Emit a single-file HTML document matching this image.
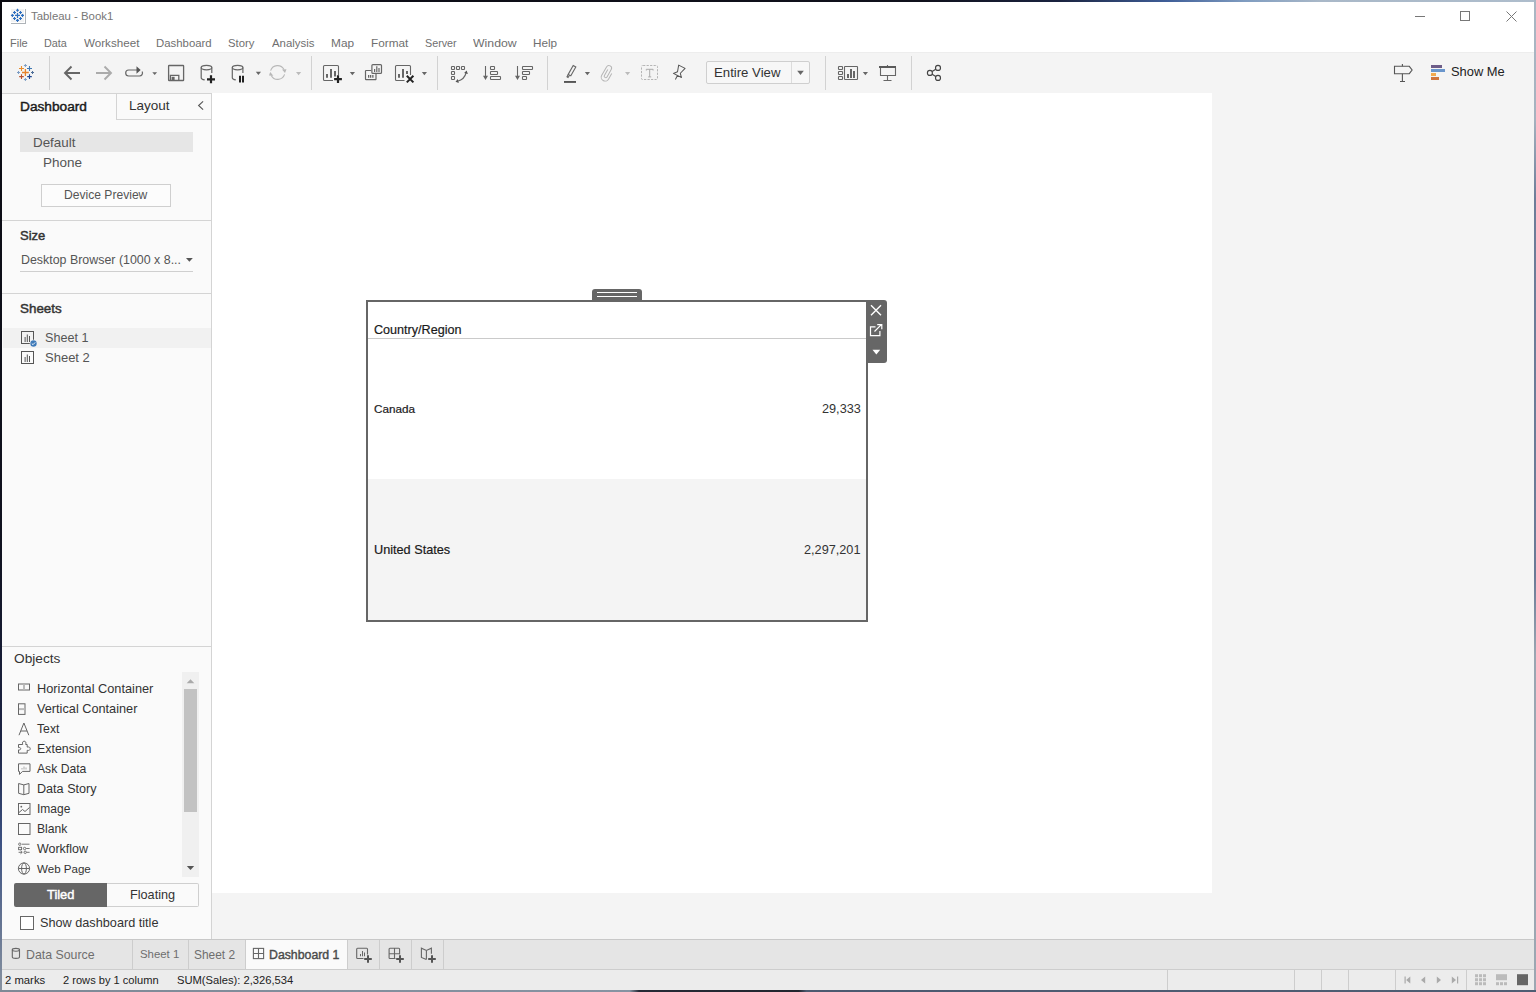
<!DOCTYPE html>
<html><head><meta charset="utf-8">
<style>
*{margin:0;padding:0;box-sizing:border-box}
html,body{width:1536px;height:992px;overflow:hidden;background:#fff}
body{position:relative;font-family:"Liberation Sans",sans-serif;color:#333}
.a{position:absolute}
.t{position:absolute;white-space:nowrap;line-height:1}
svg{position:absolute;overflow:visible}
</style></head><body>
<!-- desktop edges -->
<div class="a" style="left:0;top:0;width:1536px;height:2px;background:linear-gradient(90deg,#0b0b12 0%,#10111c 60%,#1a2340 69%,#3f5e98 76%,#7f9cc0 81%,#a9b8c8 86%,#aebdcc 100%)"></div>
<div class="a" style="left:0;top:0;width:2px;height:992px;background:linear-gradient(180deg,#0a0a10 0%,#10121f 55%,#1c2445 75%,#3d5283 85%,#8792a0 100%)"></div>
<div class="a" style="left:1534px;top:0;width:2px;height:992px;background:linear-gradient(180deg,#aab7c4 0%,#a5b2bf 12%,#6d7d99 20%,#6a7a96 58%,#9aa6b2 66%,#9ca7b2 100%)"></div>
<div class="a" style="left:0;top:990px;width:1536px;height:2px;background:linear-gradient(90deg,#7e8996 0%,#8693a2 41%,#262a36 41.6%,#22262f 52%,#4c5a70 52.5%,#4f5d73 100%)"></div>
<!-- title bar -->
<div class="a" style="left:2px;top:2px;width:1532px;height:50px;background:#fff"></div>
<div class="a" style="left:11px;top:9px;width:13px;height:13px;background:#f2f2f2"></div><div class="a" style="left:25px;top:9px;width:1px;height:15px;background:#aeb3b8"></div><div class="a" style="left:11px;top:23px;width:15px;height:1px;background:#aeb3b8"></div>
<div class="t" style="left:31px;top:11px;font-size:11.4px;color:#777">Tableau - Book1</div>
<div class="a" style="left:1415px;top:16px;width:10px;height:1px;background:#777"></div>
<div class="a" style="left:1460px;top:11px;width:10px;height:10px;border:1px solid #777"></div>

<!-- menu -->
<div class="t" style="left:10px;top:38px;font-size:11.5px;color:#6f6f6f;transform:scaleX(0.957);transform-origin:0 0">File</div>
<div class="t" style="left:44px;top:38px;font-size:11.5px;color:#6f6f6f;transform:scaleX(0.942);transform-origin:0 0">Data</div>
<div class="t" style="left:84px;top:38px;font-size:11.5px;color:#6f6f6f;transform:scaleX(1.011);transform-origin:0 0">Worksheet</div>
<div class="t" style="left:156px;top:38px;font-size:11.5px;color:#6f6f6f;transform:scaleX(0.989);transform-origin:0 0">Dashboard</div>
<div class="t" style="left:228px;top:38px;font-size:11.5px;color:#6f6f6f;transform:scaleX(0.981);transform-origin:0 0">Story</div>
<div class="t" style="left:272px;top:38px;font-size:11.5px;color:#6f6f6f;transform:scaleX(0.993);transform-origin:0 0">Analysis</div>
<div class="t" style="left:331px;top:38px;font-size:11.5px;color:#6f6f6f;transform:scaleX(1.031);transform-origin:0 0">Map</div>
<div class="t" style="left:371px;top:38px;font-size:11.5px;color:#6f6f6f;transform:scaleX(1.022);transform-origin:0 0">Format</div>
<div class="t" style="left:425px;top:38px;font-size:11.5px;color:#6f6f6f;transform:scaleX(0.935);transform-origin:0 0">Server</div>
<div class="t" style="left:473px;top:38px;font-size:11.5px;color:#6f6f6f;transform:scaleX(1.068);transform-origin:0 0">Window</div>
<div class="t" style="left:533px;top:38px;font-size:11.5px;color:#6f6f6f;transform:scaleX(1.021);transform-origin:0 0">Help</div>

<!-- toolbar -->
<div class="a" style="left:2px;top:52px;width:1532px;height:41px;background:#f4f4f4;border-top:1px solid #ededed"></div>
<div class="a" style="left:49px;top:56px;width:1px;height:34px;background:#d2d2d2"></div>
<div class="a" style="left:311px;top:56px;width:1px;height:34px;background:#d2d2d2"></div>
<div class="a" style="left:437px;top:56px;width:1px;height:34px;background:#d2d2d2"></div>
<div class="a" style="left:547px;top:56px;width:1px;height:34px;background:#d2d2d2"></div>
<div class="a" style="left:825px;top:56px;width:1px;height:34px;background:#d2d2d2"></div>
<div class="a" style="left:911px;top:56px;width:1px;height:34px;background:#d2d2d2"></div>
<!-- Entire View -->
<div class="a" style="left:706px;top:61px;width:104px;height:23px;border:1px solid #cfcfcf;border-radius:2px;background:#f7f7f7"></div>
<div class="a" style="left:791px;top:62px;width:1px;height:21px;background:#dcdcdc"></div>
<div class="t" style="left:714px;top:66px;font-size:13.2px;color:#333">Entire View</div>
<div class="t" style="left:1451px;top:66px;font-size:12.9px;color:#222">Show Me</div>

<!-- left panel -->
<div class="a" style="left:2px;top:93px;width:210px;height:846px;background:#fafafa;border-right:1px solid #d4d4d4;border-top:1px solid #d4d4d4"></div>
<div class="a" style="left:116px;top:93px;width:96px;height:27px;border-left:1px solid #d4d4d4;border-bottom:1px solid #d4d4d4;border-right:1px solid #d4d4d4"></div>
<div class="t" style="left:20px;top:100px;font-size:13.7px;color:#1a1a1a;-webkit-text-stroke:0.45px #1a1a1a">Dashboard</div>
<div class="t" style="left:129px;top:99px;font-size:13.5px;color:#333">Layout</div>
<div class="a" style="left:20px;top:132px;width:173px;height:20px;background:#e6e6e6"></div>
<div class="t" style="left:33px;top:136px;font-size:13.4px;color:#555">Default</div>
<div class="t" style="left:43px;top:156px;font-size:13.5px;color:#555">Phone</div>
<div class="a" style="left:41px;top:184px;width:130px;height:23px;border:1px solid #cfcfcf;background:#fcfcfc"></div>
<div class="t" style="left:64px;top:189px;font-size:12.1px;color:#555">Device Preview</div>
<div class="a" style="left:2px;top:220px;width:209px;height:1px;background:#d4d4d4"></div>
<div class="t" style="left:20px;top:229px;font-size:13px;color:#333;-webkit-text-stroke:0.45px #333">Size</div>
<div class="t" style="left:21px;top:254px;font-size:12.42px;color:#555">Desktop Browser (1000 x 8...</div>
<div class="a" style="left:20px;top:271px;width:173px;height:1px;background:#cfcfcf"></div>
<div class="a" style="left:2px;top:293px;width:209px;height:1px;background:#d4d4d4"></div>
<div class="t" style="left:20px;top:302px;font-size:13.4px;color:#333;-webkit-text-stroke:0.45px #333">Sheets</div>
<div class="a" style="left:3px;top:328px;width:208px;height:20px;background:#f1f1f1"></div>
<div class="t" style="left:45px;top:332px;font-size:12.6px;color:#555">Sheet 1</div>
<div class="t" style="left:45px;top:351px;font-size:13px;color:#555">Sheet 2</div>
<div class="a" style="left:2px;top:646px;width:209px;height:1px;background:#d4d4d4"></div>
<div class="t" style="left:14px;top:652px;font-size:13.7px;color:#333">Objects</div>
<!-- objects list -->
<div class="t" style="left:37px;top:683px;font-size:12.77px;color:#333">Horizontal Container</div>
<div class="t" style="left:37px;top:703px;font-size:12.72px;color:#333">Vertical Container</div>
<div class="t" style="left:37px;top:723px;font-size:12.22px;color:#333">Text</div>
<div class="t" style="left:37px;top:743px;font-size:12.39px;color:#333">Extension</div>
<div class="t" style="left:37px;top:763px;font-size:12.17px;color:#333">Ask Data</div>
<div class="t" style="left:37px;top:783px;font-size:12.61px;color:#333">Data Story</div>
<div class="t" style="left:37px;top:803px;font-size:12.0px;color:#333">Image</div>
<div class="t" style="left:37px;top:823px;font-size:12.16px;color:#333">Blank</div>
<div class="t" style="left:37px;top:843px;font-size:12.46px;color:#333">Workflow</div>
<div class="t" style="left:37px;top:864px;font-size:11.57px;color:#333">Web Page</div>
<!-- scrollbar -->
<div class="a" style="left:182px;top:672px;width:17px;height:205px;background:#f0f0f0"></div>
<div class="a" style="left:184px;top:689px;width:13px;height:123px;background:#c2c2c2"></div>
<!-- tiled/floating -->
<div class="a" style="left:14px;top:883px;width:93px;height:24px;background:#666;border-radius:2px 0 0 2px"></div>
<div class="a" style="left:107px;top:883px;width:92px;height:24px;background:#fafafa;border:1px solid #cfcfcf;border-left:none;border-radius:0 2px 2px 0"></div>
<div class="t" style="left:47px;top:889px;font-size:12.9px;color:#fff;-webkit-text-stroke:0.45px #fff">Tiled</div>
<div class="t" style="left:130px;top:889px;font-size:12.7px;color:#333">Floating</div>
<div class="a" style="left:20px;top:916px;width:14px;height:14px;border:1px solid #666;background:#fff"></div>
<div class="t" style="left:40px;top:917px;font-size:12.7px;color:#333">Show dashboard title</div>

<!-- canvas -->
<div class="a" style="left:212px;top:93px;width:1322px;height:846px;background:#f4f4f4"></div>
<div class="a" style="left:212px;top:93px;width:1000px;height:800px;background:#fff"></div>

<!-- sheet object -->
<div class="a" style="left:592px;top:289px;width:50px;height:13px;background:#666;border-radius:3px 3px 0 0"></div>
<div class="a" style="left:597px;top:292px;width:40px;height:1px;background:#fff"></div>
<div class="a" style="left:597px;top:296px;width:40px;height:1px;background:#fff"></div>
<div class="a" style="left:366px;top:300px;width:502px;height:322px;border:2px solid #666;background:#fff"></div>
<div class="a" style="left:368px;top:479px;width:498px;height:141px;background:#f4f4f4"></div>
<div class="a" style="left:368px;top:338px;width:498px;height:1px;background:#cacaca"></div>
<div class="a" style="left:866px;top:300px;width:21px;height:63px;background:#666;border-radius:0 3px 3px 0"></div>
<div class="t" style="left:374px;top:324px;font-size:12.6px;color:#1a1a1a;-webkit-text-stroke:0.2px #1a1a1a">Country/Region</div>
<div class="t" style="left:374px;top:403px;font-size:11.7px;color:#1a1a1a;-webkit-text-stroke:0.2px #1a1a1a">Canada</div>
<div class="t" style="left:374px;top:544px;font-size:12.7px;color:#1a1a1a;-webkit-text-stroke:0.2px #1a1a1a">United States</div>
<div class="t" style="left:822px;top:403px;font-size:12.7px;color:#333">29,333</div>
<div class="t" style="left:804px;top:544px;font-size:12.7px;color:#333">2,297,201</div>

<!-- tab bar -->
<div class="a" style="left:2px;top:939px;width:1532px;height:30px;background:#e5e5e5;border-top:1px solid #c8c8c8"></div>
<div class="a" style="left:132px;top:940px;width:1px;height:29px;background:#cdcdcd"></div>
<div class="a" style="left:188px;top:940px;width:1px;height:29px;background:#cdcdcd"></div>
<div class="a" style="left:245px;top:940px;width:103px;height:29px;background:#fafafa;border-left:1px solid #cdcdcd;border-right:1px solid #cdcdcd"></div>
<div class="a" style="left:379px;top:940px;width:1px;height:29px;background:#cdcdcd"></div>
<div class="a" style="left:411px;top:940px;width:1px;height:29px;background:#cdcdcd"></div>
<div class="a" style="left:443px;top:940px;width:1px;height:29px;background:#cdcdcd"></div>
<div class="t" style="left:26px;top:949px;font-size:12.33px;color:#6e6e6e">Data Source</div>
<div class="t" style="left:140px;top:949px;font-size:11.4px;color:#6e6e6e">Sheet 1</div>
<div class="t" style="left:194px;top:950px;font-size:11.9px;color:#6e6e6e">Sheet 2</div>
<div class="t" style="left:269px;top:949px;font-size:12.3px;color:#4a4a4a;-webkit-text-stroke:0.4px #4a4a4a">Dashboard 1</div>

<!-- status bar -->
<div class="a" style="left:2px;top:969px;width:1532px;height:21px;background:#ececec;border-top:1px solid #cdcdcd"></div>
<div class="a" style="left:1167px;top:970px;width:1px;height:20px;background:#cdcdcd"></div>
<div class="a" style="left:1294px;top:970px;width:1px;height:20px;background:#cdcdcd"></div>
<div class="a" style="left:1321px;top:970px;width:1px;height:20px;background:#cdcdcd"></div>
<div class="a" style="left:1348px;top:970px;width:1px;height:20px;background:#cdcdcd"></div>
<div class="a" style="left:1395px;top:970px;width:1px;height:20px;background:#cdcdcd"></div>
<div class="a" style="left:1466px;top:970px;width:1px;height:20px;background:#cdcdcd"></div>
<div class="t" style="left:5px;top:975px;font-size:11.3px;color:#222">2 marks</div>
<div class="t" style="left:63px;top:975px;font-size:11.1px;color:#222">2 rows by 1 column</div>
<div class="t" style="left:177px;top:975px;font-size:11.2px;color:#222">SUM(Sales): 2,326,534</div>

<!--ICONS-->
<svg width="1536" height="992" viewBox="0 0 1536 992" style="left:0;top:0">
<!-- title icon -->
<g stroke="#2d6fc0" stroke-width="1.1" fill="none">
<path d="M17.5 13v4.9M15.05 15.45h4.9" stroke-width="1.2"/>
<path d="M17.5 8.8v3M16 10.3h3M17.5 18.9v3M16 20.4h3M12.4 13.9v3M10.9 15.4h3M22.5 13.9v3M21 15.4h3M14.5 11v3M13 12.5h3M20.5 11v3M19 12.5h3M14.5 17v3M13 18.5h3M20.5 17v3M19 18.5h3"/>
</g>
<!-- window controls -->
<path d="M1506.5 11.5l10 10M1516.5 11.5l-10 10" stroke="#777" stroke-width="1"/>
<!-- tableau logo toolbar -->
<g stroke-width="1.1" fill="none">
<path d="M25.4 69.1v6.8M22 72.5h6.8" stroke="#e8832a" stroke-width="1.3"/>
<path d="M21.5 66v5M19 68.5h5" stroke="#e98d2c"/>
<path d="M29.5 66v5M27 68.5h5" stroke="#3f78b2"/>
<path d="M21.5 74.3v4.6M19.2 76.6h4.6" stroke="#b8512e"/>
<path d="M29.5 74.3v4.6M27.2 76.6h4.6" stroke="#1f4690"/>
<path d="M25.4 64v3M23.9 65.5h3" stroke="#7d9dc4" stroke-width="1"/>
<path d="M25.4 78v3M23.9 79.5h3" stroke="#7d9dc4" stroke-width="1"/>
<path d="M18.5 71v3M17 72.5h3" stroke="#7d9dc4" stroke-width="1"/>
<path d="M32.5 71v3M31 72.5h3" stroke="#4f6f99" stroke-width="1"/>
</g>
<!-- back / fwd -->
<path d="M80 73H65.5M71.5 66.5L65 73l6.5 6.5" stroke="#666" stroke-width="1.9" fill="none"/>
<path d="M96 73h14.5M104.5 66.5L111 73l-6.5 6.5" stroke="#ababab" stroke-width="1.9" fill="none"/>
<!-- redo loop -->
<path d="M137 70H128.7a3 3 0 0 0 0 6h10.6a3 3 0 0 0 2.8-4.5" stroke="#666" stroke-width="1.2" fill="none"/>
<path d="M136.5 66.3l4.2 3.7-4.2 3.7z" fill="#555"/>
<!-- dropdown triangles -->
<g fill="#666">
<path d="M152.3 72.2h4.8l-2.4 2.7z"/>
<path d="M255.8 71.8h5.2l-2.6 3.3z"/>
<path d="M349.8 72h5.2l-2.6 3.2z"/>
<path d="M421.8 72h5.2l-2.6 3.2z"/>
<path d="M584.8 72h5.2l-2.6 3.2z"/>
<path d="M862.8 72h5.2l-2.6 3.2z"/>
<path d="M797.2 70.8h6.6l-3.3 4.2z"/>
</g>
<g fill="#bbb">
<path d="M296 72h5.2l-2.6 3.2z"/>
<path d="M625 72h5.2l-2.6 3.2z"/>
</g>
<!-- save -->
<g stroke="#666" fill="none" stroke-width="1.3">
<rect x="168.6" y="65.5" width="15" height="15" rx="0.6"/>
<path d="M170.4 80.5v-5.2h8.4v5.2"/>
</g>
<rect x="171.6" y="76.8" width="3" height="3.7" fill="#666"/>
<!-- cylinder + -->
<g stroke="#666" fill="none" stroke-width="1.2">
<ellipse cx="206.5" cy="67.6" rx="5.3" ry="2.2"/>
<path d="M201.2 67.6v10.2c0 1.1 1.5 1.9 3.5 2.1M211.8 67.6v5.4"/>
<ellipse cx="237.6" cy="67.6" rx="5.3" ry="2.2"/>
<path d="M232.3 67.6v10.2c0 1.1 1.5 1.9 3.5 2.1M242.9 67.6v5.4"/>
</g>
<path d="M211 75.3v8M207 79.3h8" stroke="#222" stroke-width="2.2"/>
<path d="M240 75.8v6.8M243 75.8v6.8" stroke="#222" stroke-width="2"/>
<!-- refresh -->
<g stroke="#b8b8b8" fill="none" stroke-width="1.1">
<path d="M270.6 70.6A7.3 7.3 0 0 1 284 69.6"/>
<path d="M284.6 74.4A7.3 7.3 0 0 1 271.2 75.4"/>
</g>
<path d="M282 69.4L286.5 69.2L285 73Z M269 75.6L273.4 75.8L270.2 72Z" fill="#b8b8b8"/>
<!-- new worksheet -->
<g stroke="#666" fill="none" stroke-width="1.1">
<path d="M333 80.5h-8.5a1 1 0 0 1-1-1v-13a1 1 0 0 1 1-1h13a1 1 0 0 1 1 1v8.5"/>
<path d="M404.5 80.5h-8a1 1 0 0 1-1-1v-13a1 1 0 0 1 1-1h13a1 1 0 0 1 1 1v8.5"/>
</g>
<path d="M326 74h2v3.8h-2zM330 69h2v8.8h-2zM334 71h2v5.6h-2z" fill="#666"/>
<path d="M338 75.3v7.8M334.1 79.2h7.8" stroke="#222" stroke-width="2.2"/>
<!-- duplicate -->
<g stroke="#666" fill="none" stroke-width="1.2">
<rect x="371.9" y="64.6" width="9.6" height="8.8" rx="1"/>
<path d="M371.3 70.5h-5.2a0.6 0.6 0 0 0-0.6 0.6v8a0.6 0.6 0 0 0 0.6 0.6h9.3a0.6 0.6 0 0 0 0.6-0.6v-5.4"/>
</g>
<path d="M374 69h1.2v3h-1.2zM376.2 66.2h1.2v5.8h-1.2zM378.4 68h1.2v4h-1.2z" fill="#666"/>
<path d="M368 75h1.3v2.7H368zM370 75h1.3v2.7H370zM372.2 75h1.3v2.7h-1.3z" fill="#666"/>
<!-- clear -->
<path d="M398 74h2v3.8h-2zM402 69h2v8.8h-2zM406 71h2v3h-2z" fill="#666"/>
<path d="M406.8 75.8l6.6 6.6M413.4 75.8l-6.6 6.6" stroke="#222" stroke-width="2"/>
<!-- swap -->
<g stroke="#666" fill="none" stroke-width="1.1">
<rect x="451.5" y="66.5" width="3" height="3" rx="0.6"/>
<rect x="456.5" y="66.5" width="3" height="3" rx="0.6"/>
<rect x="461.5" y="66.5" width="3" height="3" rx="0.6"/>
<rect x="451.5" y="71.5" width="3" height="3" rx="0.6"/>
<rect x="451.5" y="76.5" width="3" height="3" rx="0.6"/>
<path d="M457.5 81.2Q464.5 79.5 466.2 72.5"/>
</g>
<path d="M466.6 70.5L467.9 73.9L464.1 72.9Z M455.5 81.7L458.8 82.9L457.8 79.1Z" fill="#555"/>
<!-- sort asc / desc -->
<g stroke="#666" fill="none" stroke-width="1.1">
<path d="M485.5 66v11"/>
<path d="M517.5 66v11"/>
<rect x="490.5" y="66.5" width="4" height="3" rx="0.6"/>
<rect x="490.5" y="71.5" width="7" height="3" rx="0.6"/>
<rect x="490.5" y="76.5" width="10" height="3" rx="0.6"/>
<rect x="522.5" y="66.5" width="10" height="3" rx="0.6"/>
<rect x="522.5" y="71.5" width="7" height="3" rx="0.6"/>
<rect x="522.5" y="76.5" width="4" height="3" rx="0.6"/>
</g>
<path d="M483 75.8h5l-2.5 4.3z M515 75.8h5l-2.5 4.3z" fill="#666"/>
<!-- highlighter -->
<g stroke="#666" fill="none" stroke-width="1.1">
<path d="M573.2 65.6l2.6 1.4-5 8.8-2.6-1.4z"/>
<path d="M568.2 74.4l-1.2 2.5 1 0.6 1.6-2.3"/>
</g>
<rect x="564" y="81" width="12" height="1.9" fill="#555"/>
<!-- paperclip -->
<path transform="translate(607,72.5) rotate(30)" d="M-0.8 -3V3.8a1.5 1.5 0 0 0 3 0V-4.6a2.7 2.7 0 0 0 -5.4 0V5a3.9 3.9 0 0 0 7.8 0V-1.5" stroke="#b5b5b5" stroke-width="1" fill="none"/>
<!-- T dashed -->
<rect x="641.5" y="65.5" width="16" height="14" rx="1" stroke="#b5b5b5" stroke-width="1" stroke-dasharray="2.2 1.3" stroke-dashoffset="-0.6" fill="none"/>
<path d="M646.3 69.3h6.8M649.7 69.3v7.6M648.2 76.9h3M646.3 69.3v1.2M653.1 69.3v1.2" stroke="#aaa" stroke-width="1" fill="none"/>
<!-- pin -->
<path transform="translate(679.65,71.1) rotate(27)" d="M-3.6 -4.9H3.6L1.6 1.6L4.5 4.9H-4.5L-1.6 1.6Z M0 4.9V9.4" stroke="#555" stroke-width="1" fill="none" stroke-linejoin="round"/>
<!-- show cards -->
<g stroke="#666" fill="none" stroke-width="1.1">
<rect x="838.5" y="66.5" width="4" height="3" rx="0.6"/>
<rect x="838.5" y="71.5" width="4" height="3" rx="0.6"/>
<rect x="838.5" y="76.5" width="4" height="3" rx="0.6"/>
<rect x="844.5" y="66.5" width="13" height="13" rx="0.6"/>
</g>
<path d="M847 74h2v4h-2zM850 69h2v9h-2zM853 71h2v7h-2z" fill="#666"/>
<!-- presentation -->
<g stroke="#666" fill="none" stroke-width="1.1">
<path d="M880.5 67.5v8h15v-8"/>
<path d="M887.5 75.5v4.5M883.5 80.5h8M887.5 65v1"/>
</g>
<rect x="879" y="66" width="17" height="2" fill="#5a5a5a"/>
<!-- share -->
<g stroke="#444" fill="none" stroke-width="1.15">
<circle cx="938" cy="67.9" r="2.5"/>
<circle cx="929.9" cy="72.9" r="2.5"/>
<circle cx="938" cy="77.9" r="2.5"/>
<path d="M932.1 71.6l3.7-2.3M932.1 74.2l3.7 2.3"/>
</g>
<!-- sign -->
<g stroke="#555" fill="none" stroke-width="1.1">
<path d="M1394.5 66.3h14.8l2.8 3.7-2.8 3.7h-14.8z"/>
<path d="M1402.4 64v2.3M1402.4 73.7v7.6M1400 81.5h5"/>
</g>
<!-- show me bars -->
<rect x="1431" y="65" width="11" height="3" fill="#6d5c88"/>
<rect x="1431" y="69" width="14" height="3" fill="#6a96cc"/>
<rect x="1431" y="73" width="5" height="3" fill="#f2aa50"/>
<rect x="1431" y="77" width="8" height="3" fill="#d0753e"/>
</svg>

<!--ICONS2-->
<svg width="1536" height="992" viewBox="0 0 1536 992" style="left:0;top:0">
<!-- panel chevron -->
<path d="M203.1 101.3l-4.5 4.2 4.5 4.2" stroke="#555" stroke-width="1.1" fill="none"/>
<!-- size dropdown -->
<path d="M186 258h6.8l-3.4 3.8z" fill="#555"/>
<!-- sheet icons -->
<g stroke="#555" fill="none" stroke-width="1">
<rect x="21.5" y="331.5" width="12" height="12"/>
<rect x="21.5" y="351.5" width="12" height="12"/>
</g>
<path d="M24.6 337h1v5h-1zM26.8 334.5h1v7.5h-1zM29 336h1v6h-1z" fill="#555"/>
<path d="M24.6 357h1v5h-1zM26.8 354.5h1v7.5h-1zM29 356h1v6h-1z" fill="#555"/>
<circle cx="33.5" cy="343.5" r="3.7" fill="#fafafa"/>
<circle cx="33.5" cy="343.5" r="3.2" fill="#3f7ab8"/>
<path d="M31.8 343.5l1.2 1.2 2.2-2.3" stroke="#fff" stroke-width="0.9" fill="none"/>
<!-- objects icons -->
<g stroke="#666" fill="none" stroke-width="1">
<!-- horizontal container -->
<rect x="18.5" y="684" width="11" height="6"/><path d="M24 684.5v5" stroke="#bbb" stroke-width="2"/>
<!-- vertical container -->
<rect x="18.5" y="703.8" width="6.5" height="10.6"/><path d="M19 709.1h5.5" stroke="#bbb" stroke-width="2"/>
<!-- text A -->
<path d="M19 735.2l4.9-12.2 4.9 12.2M20.8 731h6.2"/>
<!-- extension puzzle -->
<path d="M18.5 744.5h4.2c-0.6-2 0-3.3 1.5-3.3s2.1 1.3 1.5 3.3h1.5v2.6c2-0.5 3 0.3 3 1.6s-1 2.1-3 1.6v2.8h-8.7v-3.2c1.5 0.3 2.2-0.3 2.2-1.2s-0.7-1.5-2.2-1.1z"/>
<!-- ask data -->
<path d="M18.5 763.8h11.5v7.6h-7.5l-3 3v-3h-1z"/><path d="M22 769.5v-1.5M24 769.5v-3M26 769.5v-2" stroke="#aaa"/>
<!-- data story -->
<path d="M18.6 783.5l5.2 1.4 5.2-1.4v9.8l-5.2 1.4-5.2-1.4zM23.8 784.9v9.8"/>
<!-- image -->
<rect x="18.5" y="803.5" width="11.5" height="11"/>
<path d="M19 812.5l3.5-3 2.5 2 4.5-4"/>
<!-- blank -->
<rect x="18.5" y="823.5" width="11.5" height="11"/>
<!-- web page globe -->
<circle cx="24" cy="868.5" r="5.6"/>
<ellipse cx="24" cy="868.5" rx="2.4" ry="5.6"/>
<path d="M18.4 868.5h11.2"/>
</g>

<circle cx="21.3" cy="806.7" r="0.9" fill="#666"/>
<!-- workflow -->
<g stroke="#666" fill="none" stroke-width="0.9">
<circle cx="19.8" cy="844.2" r="1.2"/><path d="M22 844.2h7.5"/>
<rect x="18.6" y="847.3" width="3" height="2.4"/><circle cx="24.6" cy="848.5" r="1.2"/><path d="M26.2 848.5h3.4"/>
<path d="M18.6 852.3h3.5M20.5 850.8l1.7 1.5-1.7 1.5"/><circle cx="25.2" cy="852.3" r="1.2"/><path d="M26.6 852.3h3"/>
</g>
<!-- scrollbar arrows -->
<path d="M186.7 683.2h7.6l-3.8-4z" fill="#aaa"/>
<path d="M186.8 866h7.4l-3.7 4z" fill="#555"/>
<!-- tab bar icons -->
<g stroke="#666" fill="none" stroke-width="1.1">
<ellipse cx="15.9" cy="949.8" rx="3.6" ry="1.4"/>
<path d="M12.3 949.8v7.2c0 0.9 1.6 1.4 3.6 1.4s3.6-0.5 3.6-1.4v-7.2"/>
<rect x="253.4" y="948.4" width="10.2" height="10.2"/>
<path d="M258.5 948.4v10.2M253.4 953.5h10.2"/>
<!-- new sheet -->
<path d="M363.5 958.5h-6a0.8 0.8 0 0 1-0.8-0.8v-8.6a0.8 0.8 0 0 1 0.8-0.8h9.2a0.8 0.8 0 0 1 0.8 0.8v5.4"/>
<!-- new dashboard -->
<path d="M395.5 958.5h-5.6a0.8 0.8 0 0 1-0.8-0.8v-8.6a0.8 0.8 0 0 1 0.8-0.8h8.9a0.8 0.8 0 0 1 0.8 0.8v5.4M394.5 948.3v10.2M389.1 953.7h10.6"/>
<!-- new story -->
<path d="M426.4 959.6l-5-2.2v-9.2l5 2.2 5-2.2v5.5M426.4 950.4v9.2"/>
</g>
<path d="M360 954h1v2.2h-1zM362 951h1v5.2h-1zM364 952.4h1v3.8h-1z" fill="#666"/>
<path d="M368 955.2v7.6M364.2 959h7.6M400 955.2v7.6M396.2 959h7.6M432 955.2v7.6M428.2 959h7.6" stroke="#555" stroke-width="2"/>
<!-- status nav -->
<g fill="#aaa">
<path d="M1404.5 976.5h1.2v7h-1.2zM1410.3 976.5v7l-4.2-3.5z"/>
<path d="M1425.2 976.5v7l-4.2-3.5z"/>
<path d="M1436.8 976.5v7l4.2-3.5z"/>
<path d="M1457 976.5h1.2v7H1457zM1451.8 976.5v7l4.2-3.5z"/>
</g>
<g fill="#bbb">
<rect x="1475" y="974.2" width="3" height="3"/><rect x="1479" y="974.2" width="3" height="3"/><rect x="1483" y="974.2" width="3" height="3"/>
<rect x="1475" y="978.2" width="3" height="3"/><rect x="1479" y="978.2" width="3" height="3"/><rect x="1483" y="978.2" width="3" height="3"/>
<rect x="1475" y="982.2" width="3" height="3"/><rect x="1479" y="982.2" width="3" height="3"/><rect x="1483" y="982.2" width="3" height="3"/>
<rect x="1496" y="974.2" width="11" height="6"/>
<rect x="1496" y="982.2" width="3" height="3"/><rect x="1500" y="982.2" width="3" height="3"/><rect x="1504" y="982.2" width="3" height="3"/>
</g>
<rect x="1517" y="974.2" width="11" height="11" fill="#666"/>
<!-- sheet object toolbar -->
<path d="M871 305.3l10 10M881 305.3l-10 10" stroke="#fff" stroke-width="1.4"/>
<path d="M875.5 326.8h-5v8.8h9.4v-4.5M874.5 331.5l6.8-6.8M877.2 324.6h4.6v4.6" stroke="#fff" stroke-width="1.2" fill="none"/>
<path d="M872.5 349.8h7.7l-3.85 4.6z" fill="#fff"/>
</svg>

</body></html>
